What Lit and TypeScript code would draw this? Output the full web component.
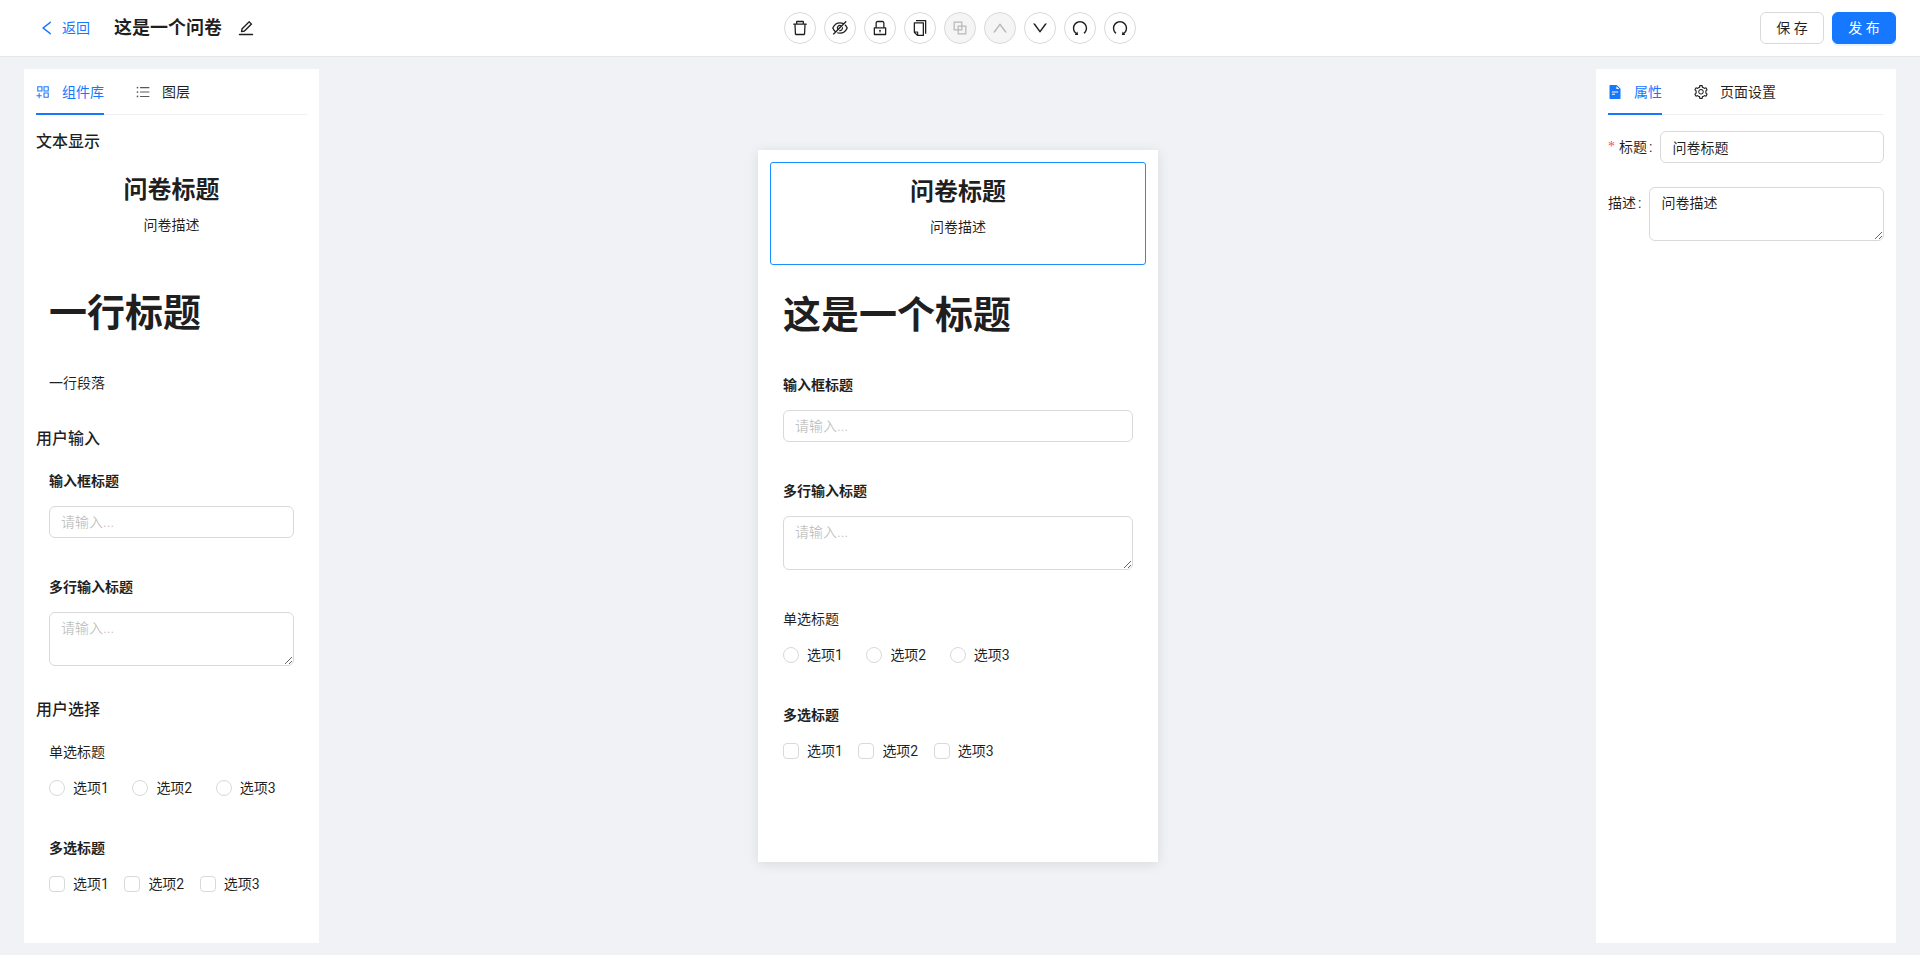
import { LitElement, html, css, svg } from "lit";
import { customElement } from "lit/decorators.js";

const P: Record<string, string> = {
  left: "M724 218.3V141c0-6.7-7.7-10.4-12.9-6.3L260.3 486.8a31.86 31.86 0 000 50.3l450.8 352.1c5.3 4.1 12.9.4 12.9-6.3v-77.3c0-4.9-2.3-9.6-6.1-12.6l-360-281 360-281.1c3.8-3 6.1-7.7 6.1-12.6z",
  edit: "M257.7 752c2 0 4-.2 6-.5L431.9 722c2-.4 3.9-1.3 5.3-2.8l423.9-423.9a9.96 9.96 0 000-14.1L694.9 114.9c-1.9-1.9-4.4-2.9-7.1-2.9s-5.2 1-7.1 2.9L256.8 538.8c-1.5 1.5-2.4 3.3-2.8 5.3l-29.5 168.2a33.5 33.5 0 009.4 29.8c6.6 6.4 14.9 9.9 23.8 9.9zm67.4-174.4L687.8 215l73.3 73.3-362.7 362.6-88.9 15.7 15.6-89zM880 836H144c-17.7 0-32 14.3-32 32v36c0 4.4 3.6 8 8 8h784c4.4 0 8-3.6 8-8v-36c0-17.7-14.3-32-32-32z",
  del: "M360 184h-8c4.4 0 8-3.6 8-8v8h304v-8c0 4.4 3.6 8 8 8h-8v72h72v-80c0-35.3-28.7-64-64-64H352c-35.3 0-64 28.7-64 64v80h72v-72zm504 72H160c-17.7 0-32 14.3-32 32v32c0 4.4 3.6 8 8 8h60.4l24.7 523c1.6 34.1 29.8 61 63.9 61h454c34.2 0 62.3-26.8 63.9-61l24.7-523H888c4.4 0 8-3.6 8-8v-32c0-17.7-14.3-32-32-32zM731.3 840H292.7l-24.2-512h487l-24.2 512z",
  eye: "M942.2 486.2Q889.47 375.11 816.7 305l-50.88 50.88C807.31 395.53 843.45 447.4 874.7 512 791.5 684.2 673.4 766 512 766q-72.67 0-133.87-22.38L323 798.75Q408 838 512 838q288.3 0 430.2-300.3a60.29 60.29 0 000-51.5zm-63.57-320.64L836 122.88a8 8 0 00-11.32 0L715.31 232.2Q624.86 186 512 186q-288.3 0-430.2 300.3a60.3 60.3 0 000 51.5q56.69 119.4 136.5 191.41L112.48 835a8 8 0 000 11.31L155.17 889a8 8 0 0011.31 0l712.15-712.12a8 8 0 000-11.32zM149.3 512C232.6 339.8 350.7 258 512 258c54.54 0 104.13 9.36 149.12 28.39l-70.3 70.3a176 176 0 00-238.13 238.13l-83.42 83.42C223.1 637.49 183.3 582.28 149.3 512zm246.7 0a112.11 112.11 0 01146.2-106.69L401.31 546.2A112 112 0 01396 512zM508 624c-3.46 0-6.87-.16-10.25-.47l-52.82 52.82a176.09 176.09 0 00227.42-227.42l-52.82 52.82c.31 3.38.47 6.79.47 10.25a111.94 111.94 0 01-112 112z",
  lock: "M832 464h-68V240c0-70.7-57.3-128-128-128H388c-70.7 0-128 57.3-128 128v224h-68c-17.7 0-32 14.3-32 32v384c0 17.7 14.3 32 32 32h640c17.7 0 32-14.3 32-32V496c0-17.7-14.3-32-32-32zM332 240c0-30.9 25.1-56 56-56h248c30.9 0 56 25.1 56 56v224H332V240zm460 600H232V536h560v304zM484 701v53c0 4.4 3.6 8 8 8h40c4.4 0 8-3.6 8-8v-53a48.01 48.01 0 10-56 0z",
  copy: "M832 64H296c-4.4 0-8 3.6-8 8v56c0 4.4 3.6 8 8 8h496v688c0 4.4 3.6 8 8 8h56c4.4 0 8-3.6 8-8V96c0-17.7-14.3-32-32-32zM704 192H192c-17.7 0-32 14.3-32 32v530.7c0 8.5 3.4 16.6 9.4 22.6l173.3 173.3c2.2 2.2 4.7 4 7.4 5.5v1.9h4.2c3.5 1.3 7.2 2 11 2H704c17.7 0 32-14.3 32-32V224c0-17.7-14.3-32-32-32zM350 856.2L263.9 770H350v86.2zM664 888H414V746c0-22.1-17.9-40-40-40H232V264h432v624z",
  block: "M856 376H648V168c0-8.8-7.2-16-16-16H168c-8.8 0-16 7.2-16 16v464c0 8.8 7.2 16 16 16h208v208c0 8.8 7.2 16 16 16h464c8.8 0 16-7.2 16-16V392c0-8.8-7.2-16-16-16zm-480 16v188H220V220h360v156H392c-8.8 0-16 7.2-16 16zm204 52v136H444V444h136zm224 360H444V648h188c8.8 0 16-7.2 16-16V444h156v360z",
  up: "M890.5 755.3L537.9 269.2c-12.8-17.6-39-17.6-51.7 0L133.5 755.3A8 8 0 00140 768h75c5.1 0 9.9-2.5 12.9-6.6L512 369.8l284.1 391.6c3 4.1 7.8 6.6 12.9 6.6h75c6.5 0 10.3-7.4 6.5-12.7z",
  down: "M884 256h-75c-5.1 0-9.9 2.5-12.9 6.6L512 654.2 227.9 262.6c-3-4.1-7.8-6.6-12.9-6.6h-75c-6.5 0-10.3 7.4-6.5 12.7l352.6 486.1c12.8 17.6 39 17.6 51.7 0l352.6-486.1c3.9-5.3.1-12.7-6.4-12.7z",
  undo: "M511.4 124C290.5 124.3 112 303 112 523.9c0 128 60.2 242 153.8 315.2l-37.5 48c-4.1 5.3-.3 13 6.3 12.9l167-.8c5.2 0 9-4.9 7.7-9.9L369.8 727a8 8 0 00-14.1-3L315 776.1c-10.2-8-20-16.7-29.3-26a318.64 318.64 0 01-68.6-101.7C200.4 609 192 567.1 192 523.9s8.4-85.1 25.1-124.5c16.1-38.1 39.2-72.3 68.6-101.7 29.4-29.4 63.6-52.5 101.7-68.6C426.9 212.4 468.8 204 512 204s85.1 8.4 124.5 25.1c38.1 16.1 72.3 39.2 101.7 68.6 29.4 29.4 52.5 63.6 68.6 101.7 16.7 39.4 25.1 81.3 25.1 124.5s-8.4 85.1-25.1 124.5a318.64 318.64 0 01-68.6 101.7c-7.5 7.5-15.3 14.5-23.4 21.2a7.93 7.93 0 00-1.2 11.1l39.4 50.5c2.8 3.5 7.9 4.1 11.4 1.3C854.5 760.8 912 649.1 912 523.9c0-221.1-179.4-400.2-400.6-399.9z",
  redo: "M758.2 839.1C851.8 765.9 912 651.9 912 523.9 912 303 733.5 124.3 512.6 124 291.4 123.7 112 302.8 112 523.9c0 125.2 57.5 236.9 147.6 310.2 3.5 2.8 8.6 2.2 11.4-1.3l39.4-50.5c2.7-3.4 2.1-8.3-1.2-11.1-8.1-6.6-15.9-13.7-23.4-21.2a318.64 318.64 0 01-68.6-101.7C200.4 609 192 567.1 192 523.9s8.4-85.1 25.1-124.5c16.1-38.1 39.2-72.3 68.6-101.7 29.4-29.4 63.6-52.5 101.7-68.6C426.9 212.4 468.8 204 512 204s85.1 8.4 124.5 25.1c38.1 16.1 72.3 39.2 101.7 68.6 29.4 29.4 52.5 63.6 68.6 101.7 16.7 39.4 25.1 81.3 25.1 124.5s-8.4 85.1-25.1 124.5a318.64 318.64 0 01-68.6 101.7c-9.3 9.3-19.1 18-29.3 26L668.2 724a8 8 0 00-14.1 3l-39.6 162.2c-1.2 5 2.6 9.9 7.7 9.9l167 .8c6.7 0 10.5-7.7 6.3-12.9l-37.3-47.9z",
  add: "M464 144H160c-8.8 0-16 7.2-16 16v304c0 8.8 7.2 16 16 16h304c8.8 0 16-7.2 16-16V160c0-8.8-7.2-16-16-16zm-52 268H212V212h200v200zm452-268H560c-8.8 0-16 7.2-16 16v304c0 8.8 7.2 16 16 16h304c8.8 0 16-7.2 16-16V160c0-8.8-7.2-16-16-16zm-52 268H612V212h200v200zm52 132H560c-8.8 0-16 7.2-16 16v304c0 8.8 7.2 16 16 16h304c8.8 0 16-7.2 16-16V560c0-8.8-7.2-16-16-16zm-52 268H612V612h200v200zM424 712H296V584c0-4.4-3.6-8-8-8h-48c-4.4 0-8 3.6-8 8v128H104c-4.4 0-8 3.6-8 8v48c0 4.4 3.6 8 8 8h128v128c0 4.4 3.6 8 8 8h48c4.4 0 8-3.6 8-8V776h128c4.4 0 8-3.6 8-8v-48c0-4.4-3.6-8-8-8z",
  bars: "M912 192H328c-4.4 0-8 3.6-8 8v56c0 4.4 3.6 8 8 8h584c4.4 0 8-3.6 8-8v-56c0-4.4-3.6-8-8-8zm0 284H328c-4.4 0-8 3.6-8 8v56c0 4.4 3.6 8 8 8h584c4.4 0 8-3.6 8-8v-56c0-4.4-3.6-8-8-8zm0 284H328c-4.4 0-8 3.6-8 8v56c0 4.4 3.6 8 8 8h584c4.4 0 8-3.6 8-8v-56c0-4.4-3.6-8-8-8zM104 228a56 56 0 10112 0 56 56 0 10-112 0zm0 284a56 56 0 10112 0 56 56 0 10-112 0zm0 284a56 56 0 10112 0 56 56 0 10-112 0z",
  file: "M854.6 288.7c6 6 9.4 14.1 9.4 22.6V928c0 17.7-14.3 32-32 32H192c-17.7 0-32-14.3-32-32V96c0-17.7 14.3-32 32-32h424.7c8.5 0 16.7 3.4 22.7 9.4l215.2 215.3zM790.2 326L602 137.8V326h188.2zM320 482a8 8 0 00-8 8v48a8 8 0 008 8h384a8 8 0 008-8v-48a8 8 0 00-8-8H320zm0 136a8 8 0 00-8 8v48a8 8 0 008 8h184a8 8 0 008-8v-48a8 8 0 00-8-8H320z",
  gear: "M924.8 625.7l-65.5-56c3.1-19 4.7-38.4 4.7-57.8s-1.6-38.8-4.7-57.8l65.5-56a32.03 32.03 0 009.3-35.2l-.9-2.6a443.74 443.74 0 00-79.7-137.9l-1.8-2.1a32.12 32.12 0 00-35.1-9.5l-81.3 28.9c-30-24.6-63.5-44-99.7-57.6l-15.7-85a32.05 32.05 0 00-25.8-25.7l-2.7-.5c-52.1-9.4-106.9-9.4-159 0l-2.7.5a32.05 32.05 0 00-25.8 25.7l-15.8 85.4a351.86 351.86 0 00-99 57.4l-81.9-29.1a32 32 0 00-35.1 9.5l-1.8 2.1a446.02 446.02 0 00-79.7 137.9l-.9 2.6c-4.5 12.5-.8 26.5 9.3 35.2l66.3 56.6c-3.1 18.8-4.6 38-4.6 57.1 0 19.2 1.5 38.4 4.6 57.1L99 625.5a32.03 32.03 0 00-9.3 35.2l.9 2.6c18.1 50.4 44.9 96.9 79.7 137.9l1.8 2.1a32.12 32.12 0 0035.1 9.5l81.9-29.1c29.8 24.5 63.1 43.9 99 57.4l15.8 85.4a32.05 32.05 0 0025.8 25.7l2.7.5a449.4 449.4 0 00159 0l2.7-.5a32.05 32.05 0 0025.8-25.7l15.7-85a350 350 0 0099.7-57.6l81.3 28.9a32 32 0 0035.1-9.5l1.8-2.1c34.8-41.1 61.6-87.5 79.7-137.9l.9-2.6c4.5-12.3.8-26.3-9.3-35zM788.3 465.9c2.5 15.1 3.8 30.6 3.8 46.1s-1.3 31-3.8 46.1l-6.6 40.1 74.7 63.9a370.03 370.03 0 01-42.6 73.6L721 702.8l-31.4 25.8c-23.9 19.6-50.5 35-79.3 45.8l-38.1 14.3-17.9 97a377.5 377.5 0 01-85 0l-17.9-97.2-37.8-14.5c-28.5-10.8-55-26.2-78.7-45.7l-31.4-25.9-93.4 33.2c-17-22.9-31.2-47.6-42.6-73.6l75.5-64.5-6.5-40c-2.4-14.9-3.7-30.3-3.7-45.5 0-15.3 1.2-30.6 3.7-45.5l6.5-40-75.5-64.5c11.3-26.1 25.6-50.7 42.6-73.6l93.4 33.2 31.4-25.9c23.7-19.5 50.2-34.9 78.7-45.7l37.9-14.3 17.9-97.2c28.1-3.2 56.8-3.2 85 0l17.9 97 38.1 14.3c28.7 10.8 55.4 26.2 79.3 45.8l31.4 25.8 92.8-32.9c17 22.9 31.2 47.6 42.6 73.6L781.8 426l6.5 39.9zM512 326c-97.2 0-176 78.8-176 176s78.8 176 176 176 176-78.8 176-176-78.8-176-176-176zm79.2 255.2A111.6 111.6 0 01512 614c-29.9 0-58-11.7-79.2-32.8A111.6 111.6 0 01400 502c0-29.9 11.7-58 32.8-79.2C454 401.6 482.1 390 512 390c29.9 0 58 11.6 79.2 32.8A111.6 111.6 0 01624 502c0 29.9-11.7 58-32.8 79.2z",
};

const icon = (n: string) =>
  html`<svg class="ic" viewBox="64 64 896 896" fill="currentColor">${svg`<path d=${P[n]}></path>`}</svg>`;

@customElement("app-root")
export class AppRoot extends LitElement {
  static styles = css`
    :host {
      display: flex;
      flex-direction: column;
      width: 1920px;
      height: 955px;
      overflow: hidden;
      background: #f0f2f5;
      color: rgba(0, 0, 0, 0.88);
      font: 14px/22px Roboto, "Noto Sans CJK SC", sans-serif;
    }
    * { box-sizing: border-box; }
    .ic { width: 14px; height: 14px; display: block; flex: none; }

    .header {
      flex: none;
      height: 57px;
      background: #fff;
      border-bottom: 1px solid #e5e7eb;
      padding: 0 24px;
      display: grid;
      grid-template-columns: 1fr auto 1fr;
      align-items: center;
    }
    .header .ic { width: 16px; height: 16px; }
    .h-left { display: flex; align-items: center; }
    .back { display: flex; align-items: center; gap: 7px; padding: 0 16px 0 15px; color: #1677ff; }
    .doc-title { margin: 0 0 0 8px; font-size: 18px; line-height: 28px; font-weight: 600; }
    .pencil { margin-left: 16px; }
    .tools { display: flex; gap: 8px; }
    .tool {
      width: 32px; height: 32px;
      border: 1px solid #d9d9d9;
      border-radius: 50%;
      background: #fff;
      display: flex; align-items: center; justify-content: center;
      color: rgba(0, 0, 0, 0.88);
    }
    .tool.off { background: #f5f5f5; color: rgba(0, 0, 0, 0.25); }
    .h-right { display: flex; justify-content: flex-end; gap: 8px; }
    .btn {
      width: 64px; height: 32px;
      border: 1px solid #d9d9d9;
      border-radius: 6px;
      background: #fff;
      display: flex; align-items: center; justify-content: center;
    }
    .btn.primary { background: #1677ff; border-color: #1677ff; color: #fff; box-shadow: 0 2px 0 rgba(5, 145, 255, 0.1); }

    .main { flex: 1; min-height: 0; display: flex; padding: 12px 24px; }
    .panel { flex: none; background: #fff; padding: 0 12px; overflow: hidden; }
    .panel.lib { width: 295px; margin-right: 1px; }
    .panel.props { width: 300px; }
    .center { flex: 1; display: flex; align-items: center; justify-content: center; }
    .canvas {
      width: 400px; height: 712px;
      background: #fff;
      padding: 12px;
      box-shadow: 0 2px 12px rgba(0, 0, 0, 0.1);
      overflow: hidden;
    }

    .tabs { height: 46px; display: flex; gap: 32px; border-bottom: 1px solid #f0f0f0; }
    .tab {
      height: 46px;
      display: flex; align-items: center; gap: 12px;
      border-bottom: 2px solid transparent;
      padding-top: 2px;
    }
    .tab.on { color: #1677ff; border-bottom-color: #1677ff; }
    .dim { color: rgba(0, 0, 0, 0.65); }

    .lib-body { padding-top: 15px; }
    .group { padding-bottom: 7px; }
    .group-title { margin: 0 0 6px; font-size: 16px; line-height: 24px; font-weight: 500; }

    .item { padding: 12px; border: 1px solid transparent; border-radius: 3px; margin-bottom: 12px; }
    .item.sel { border-color: #1890ff; }
    .q-head { text-align: center; padding: 1px 0 14px; }
    .q-title { margin: 0 0 8px; font-size: 24px; line-height: 32px; font-weight: 600; }
    .q-desc { margin: 0; }
    .h1 { margin: 0 0 -2px; padding-top: 2px; font-size: 38px; line-height: 46px; font-weight: 600; }
    .para { margin: 0 0 1px; }
    .label { margin: 0 0 14px; }
    .label.b { font-weight: 600; }

    input, textarea {
      display: block;
      width: 100%;
      font: inherit;
      color: inherit;
      background: #fff;
      border: 1px solid #d9d9d9;
      border-radius: 6px;
      padding: 4px 11px;
      outline: none;
    }
    input { height: 32px; }
    textarea { height: 54px; resize: vertical; }
    ::placeholder { color: rgba(0, 0, 0, 0.25); opacity: 1; }

    .choices { display: flex; height: 22px; }
    .choices.radio { gap: 23.5px; }
    .choices.check { gap: 15.5px; }
    .choice { display: flex; align-items: center; gap: 8px; }
    .mark { width: 16px; height: 16px; border: 1px solid #d9d9d9; background: #fff; flex: none; }
    .radio .mark { border-radius: 50%; }
    .check .mark { border-radius: 4px; }

    .form { padding-top: 16px; }
    .row { display: flex; margin-bottom: 24px; }
    .row label { flex: none; height: 32px; display: flex; align-items: center; margin-right: 7px; }
    .row .star { color: #ff4d4f; margin-right: 4px; font-family: "Liberation Serif", serif; width: 7px; }
    .row .colon { margin-left: 2px; margin-right: 1px; }
    .row .field { flex: 1; min-width: 0; }
  `;

  private choices(kind: string) {
    return html`<div class="choices ${kind}">
      ${["选项1", "选项2", "选项3"].map(
        (t) => html`<div class="choice"><span class="mark"></span><span>${t}</span></div>`
      )}
    </div>`;
  }

  private head(title: string, desc: string, sel = false) {
    return html`<div class="item ${sel ? "sel" : ""}">
      <div class="q-head">
        <h2 class="q-title">${title}</h2>
        <p class="q-desc">${desc}</p>
      </div>
    </div>`;
  }

  private inputs() {
    return html`<div class="item">
        <p class="label b">输入框标题</p>
        <input placeholder="请输入..." />
      </div>
      <div class="item">
        <p class="label b">多行输入标题</p>
        <textarea placeholder="请输入..."></textarea>
      </div>`;
  }

  private picks() {
    return html`<div class="item">
        <p class="label">单选标题</p>
        ${this.choices("radio")}
      </div>
      <div class="item">
        <p class="label b">多选标题</p>
        ${this.choices("check")}
      </div>`;
  }

  render() {
    const tools: [string, boolean][] = [
      ["del", false], ["eye", false], ["lock", false], ["copy", false], ["block", true],
      ["up", true], ["down", false], ["undo", false], ["redo", false],
    ];
    return html`
      <header class="header">
        <div class="h-left">
          <div class="back">${icon("left")}<span>返回</span></div>
          <h1 class="doc-title">这是一个问卷</h1>
          <span class="pencil">${icon("edit")}</span>
        </div>
        <div class="tools">
          ${tools.map(([n, off]) => html`<div class="tool ${off ? "off" : ""}">${icon(n)}</div>`)}
        </div>
        <div class="h-right">
          <div class="btn">保 存</div>
          <div class="btn primary">发 布</div>
        </div>
      </header>
      <div class="main">
        <aside class="panel lib">
          <div class="tabs">
            <div class="tab on">${icon("add")}<span>组件库</span></div>
            <div class="tab"><span class="dim">${icon("bars")}</span><span>图层</span></div>
          </div>
          <div class="lib-body">
            <section class="group">
              <h3 class="group-title">文本显示</h3>
              ${this.head("问卷标题", "问卷描述")}
              <div class="item"><div class="h1">一行标题</div></div>
              <div class="item"><p class="para">一行段落</p></div>
            </section>
            <section class="group">
              <h3 class="group-title">用户输入</h3>
              ${this.inputs()}
            </section>
            <section class="group">
              <h3 class="group-title">用户选择</h3>
              ${this.picks()}
            </section>
          </div>
        </aside>
        <div class="center">
          <div class="canvas">
            ${this.head("问卷标题", "问卷描述", true)}
            <div class="item"><div class="h1">这是一个标题</div></div>
            ${this.inputs()} ${this.picks()}
          </div>
        </div>
        <aside class="panel props">
          <div class="tabs">
            <div class="tab on">${icon("file")}<span>属性</span></div>
            <div class="tab">${icon("gear")}<span>页面设置</span></div>
          </div>
          <div class="form">
            <div class="row">
              <label><span class="star">*</span>标题<span class="colon">:</span></label>
              <div class="field"><input .value=${"问卷标题"} /></div>
            </div>
            <div class="row">
              <label><span>描述</span><span class="colon">:</span></label>
              <div class="field"><textarea .value=${"问卷描述"}></textarea></div>
            </div>
          </div>
        </aside>
      </div>
    `;
  }
}
